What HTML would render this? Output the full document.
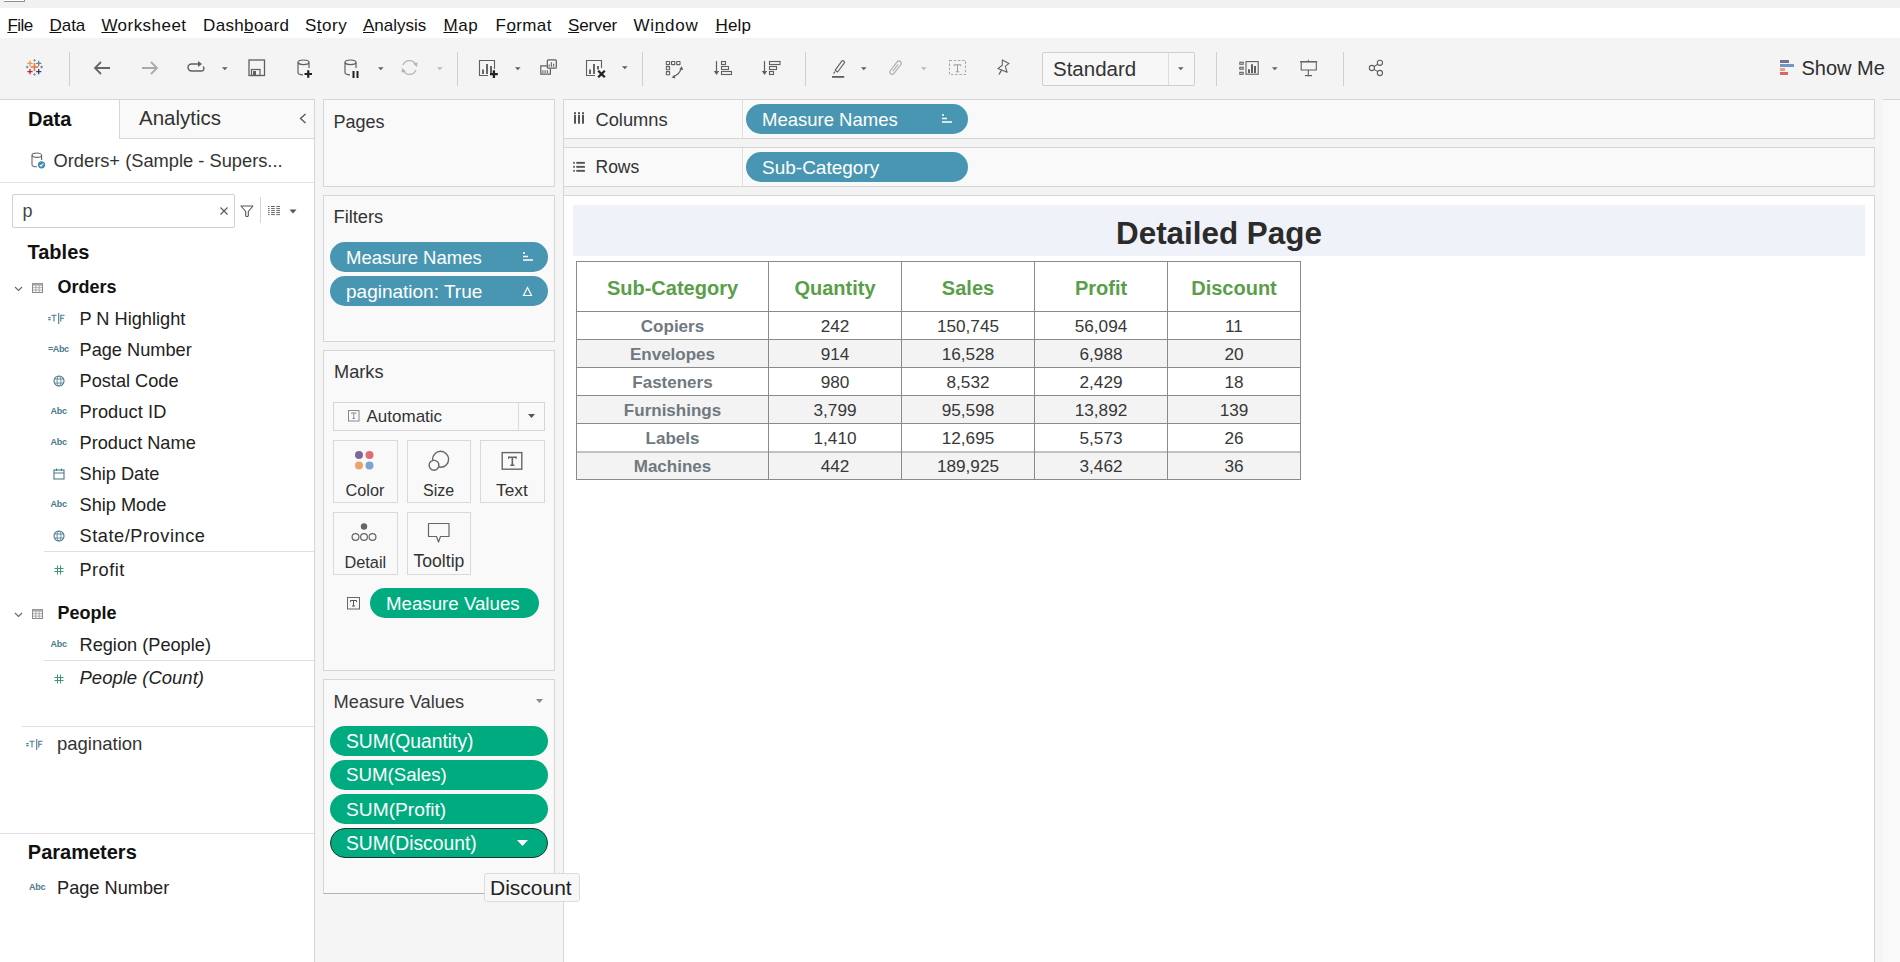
<!DOCTYPE html>
<html><head><meta charset="utf-8">
<style>
html,body{margin:0;padding:0;width:1900px;height:962px;overflow:hidden;background:#f0f0f0;}
body{position:relative;font-family:"Liberation Sans", sans-serif;}
.t{position:absolute;white-space:nowrap;}
.t u{text-decoration:underline;text-underline-offset:1px;text-decoration-thickness:1px;}
.r{position:absolute;box-sizing:border-box;}
.s{position:absolute;overflow:visible;}
</style></head><body>
<div class="r" style="left:0px;top:0px;width:1900px;height:8px;background:#f3f0f1"></div>
<div class="r" style="left:4px;top:0px;width:21px;height:2px;background:#fff;border-bottom:1px solid #918e8f;border-right:1px solid #918e8f;border-bottom-right-radius:1px"></div>
<div class="r" style="left:0px;top:8px;width:1900px;height:30px;background:#fff"></div>
<div class="r" style="left:0px;top:38px;width:1900px;height:61px;background:#f4f4f4"></div>
<div class="r" style="left:0px;top:99px;width:1900px;height:1px;background:#d3d3d3"></div>
<div class="r" style="left:0px;top:99px;width:1900px;height:863px;background:#f0f0f0"></div>
<div class="t" style="left:7.4px;top:16.6px;font-size:17px;line-height:17px;color:#111;font-weight:400;font-style:normal;letter-spacing:-0.5px"><u>F</u>ile</div>
<div class="t" style="left:49.4px;top:16.6px;font-size:17px;line-height:17px;color:#111;font-weight:400;font-style:normal;letter-spacing:0px"><u>D</u>ata</div>
<div class="t" style="left:101.4px;top:16.6px;font-size:17px;line-height:17px;color:#111;font-weight:400;font-style:normal;letter-spacing:0.46px"><u>W</u>orksheet</div>
<div class="t" style="left:203.0px;top:16.6px;font-size:17px;line-height:17px;color:#111;font-weight:400;font-style:normal;letter-spacing:0.35px">Dash<u>b</u>oard</div>
<div class="t" style="left:305.0px;top:16.6px;font-size:17px;line-height:17px;color:#111;font-weight:400;font-style:normal;letter-spacing:0.5px">S<u>t</u>ory</div>
<div class="t" style="left:363.0px;top:16.6px;font-size:17px;line-height:17px;color:#111;font-weight:400;font-style:normal;letter-spacing:0px"><u>A</u>nalysis</div>
<div class="t" style="left:443.4px;top:16.6px;font-size:17px;line-height:17px;color:#111;font-weight:400;font-style:normal;letter-spacing:0.6px"><u>M</u>ap</div>
<div class="t" style="left:495.6px;top:16.6px;font-size:17px;line-height:17px;color:#111;font-weight:400;font-style:normal;letter-spacing:0.4px">F<u>o</u>rmat</div>
<div class="t" style="left:568.0px;top:16.6px;font-size:17px;line-height:17px;color:#111;font-weight:400;font-style:normal;letter-spacing:-0.2px"><u>S</u>erver</div>
<div class="t" style="left:633.4px;top:16.6px;font-size:17px;line-height:17px;color:#111;font-weight:400;font-style:normal;letter-spacing:0.8px">Wi<u>n</u>dow</div>
<div class="t" style="left:715.4px;top:16.6px;font-size:17px;line-height:17px;color:#111;font-weight:400;font-style:normal;letter-spacing:0.2px"><u>H</u>elp</div>
<svg class="s" style="left:25px;top:59px;" width="19" height="17" viewBox="0 0 19 17"><path d="M5.5 8H13.5M9.5 4V12" stroke="#e8762c" stroke-width="1.6"/><path d="M2.4 4.3H7.6M5 1.6999999999999997V6.9" stroke="#eb9544" stroke-width="1.3"/><path d="M11.1 4.3H16.3M13.7 1.6999999999999997V6.9" stroke="#5b879b" stroke-width="1.3"/><path d="M2.4 12.6H7.6M5 10.0V15.2" stroke="#c72037" stroke-width="1.3"/><path d="M11.1 12.6H16.3M13.7 10.0V15.2" stroke="#1f447e" stroke-width="1.3"/><path d="M8.2 1.3H10.8M9.5 0.0V2.6" stroke="#7199a6" stroke-width="1"/><path d="M8.2 15.5H10.8M9.5 14.2V16.8" stroke="#7199a6" stroke-width="1"/><path d="M0.9000000000000001 8H3.5M2.2 6.7V9.3" stroke="#59879b" stroke-width="1"/><path d="M15.3 8H17.900000000000002M16.6 6.7V9.3" stroke="#7e6b8f" stroke-width="1"/></svg>
<div class="r" style="left:69px;top:52px;width:1px;height:34px;background:#d0d0d0"></div>
<svg class="s" style="left:93px;top:60px;" width="18" height="16" viewBox="0 0 18 16"><path d="M17 8H2M8 2L2 8L8 14" fill="none" stroke="#666" stroke-width="1.8"/></svg>
<svg class="s" style="left:141px;top:60px;" width="18" height="16" viewBox="0 0 18 16"><path d="M1 8H16M10 2L16 8L10 14" fill="none" stroke="#aaa" stroke-width="1.8"/></svg>
<svg class="s" style="left:186px;top:60px;" width="20" height="13" viewBox="0 0 20 13"><path d="M13 4H5.5A3.5 3.5 0 0 0 5.5 11H15.5A2.5 2.5 0 0 0 17 6.5" fill="none" stroke="#5f5f5f" stroke-width="1.4"/><path d="M12 1L16 4L12 7Z" fill="#5f5f5f"/></svg>
<svg class="s" style="left:222px;top:67px;" width="6" height="4" viewBox="0 0 6 4"><path d="M0 0.2H5.6L2.8 3.2Z" fill="#5f5f5f"/></svg>
<svg class="s" style="left:248px;top:59px;" width="18" height="18" viewBox="0 0 18 18"><rect x="1" y="1" width="15.5" height="15.5" fill="none" stroke="#5f5f5f" stroke-width="1.3"/><rect x="3.5" y="10.5" width="8.5" height="6" fill="none" stroke="#5f5f5f" stroke-width="1.2"/><rect x="5" y="12" width="3" height="5" fill="#5f5f5f"/></svg>
<svg class="s" style="left:297px;top:59px;" width="17" height="20" viewBox="0 0 17 20"><path d="M1 3.5V13.5A5.5 2.3 0 0 0 6 15.8" fill="none" stroke="#5f5f5f" stroke-width="1.2"/><ellipse cx="6.5" cy="3.3" rx="5.5" ry="2.3" fill="none" stroke="#5f5f5f" stroke-width="1.2"/><path d="M12 3.5V9" fill="none" stroke="#5f5f5f" stroke-width="1.2"/><path d="M7.5 15H15M11.25 11.2V18.8" stroke="#222" stroke-width="2.2"/></svg>
<svg class="s" style="left:344px;top:59px;" width="17" height="20" viewBox="0 0 17 20"><path d="M1 3.5V13.5A5.5 2.3 0 0 0 6 15.8" fill="none" stroke="#5f5f5f" stroke-width="1.2"/><ellipse cx="6.5" cy="3.3" rx="5.5" ry="2.3" fill="none" stroke="#5f5f5f" stroke-width="1.2"/><path d="M12 3.5V9" fill="none" stroke="#5f5f5f" stroke-width="1.2"/><path d="M9.5 12V19M13.5 12V19" stroke="#222" stroke-width="2"/></svg>
<svg class="s" style="left:378px;top:67px;" width="6" height="4" viewBox="0 0 6 4"><path d="M0 0.2H5.6L2.8 3.2Z" fill="#5f5f5f"/></svg>
<svg class="s" style="left:400px;top:59px;" width="19" height="17" viewBox="0 0 19 17"><path d="M3 6A7 7 0 0 1 16 6M16 11A7 7 0 0 1 3 11" fill="none" stroke="#b4b4b4" stroke-width="1.3"/><path d="M13 4.5L17.5 3.5L17 8Z M6 12.5L1.5 13.5L2 9Z" fill="#b4b4b4"/></svg>
<svg class="s" style="left:437px;top:67px;" width="6" height="4" viewBox="0 0 6 4"><path d="M0 0.2H5.6L2.8 3.2Z" fill="#bbb"/></svg>
<div class="r" style="left:457px;top:52px;width:1px;height:34px;background:#d0d0d0"></div>
<svg class="s" style="left:478px;top:59px;" width="22" height="20" viewBox="0 0 22 20"><path d="M10 16.5H1.5V1.5H16.5V10" fill="none" stroke="#5f5f5f" stroke-width="1.1"/><path d="M5 15V10.5M9 15V5M13 15V7" stroke="#666" stroke-width="2"/><path d="M12 15.1H19.8M15.9 11.2V19" stroke="#222" stroke-width="2.3"/></svg>
<svg class="s" style="left:515px;top:67px;" width="6" height="4" viewBox="0 0 6 4"><path d="M0 0.2H5.6L2.8 3.2Z" fill="#5f5f5f"/></svg>
<svg class="s" style="left:539px;top:58px;" width="20" height="19" viewBox="0 0 20 19"><path d="M8.3 7.8H1.8V16.2H11.4V10.8" fill="none" stroke="#5f5f5f" stroke-width="1.2"/><path d="M3.9 14.9V12.3M6.1 14.9V12.3M8.4 14.9V12.3" stroke="#666" stroke-width="1.1"/><rect x="8.3" y="1.8" width="9" height="8.4" rx="1" fill="#f4f4f4" stroke="#5f5f5f" stroke-width="1.2"/><path d="M10.2 8.8V6.5M12.4 8.8V4.2M14.6 8.8V5.8" stroke="#666" stroke-width="1.1"/></svg>
<svg class="s" style="left:585px;top:59px;" width="22" height="20" viewBox="0 0 22 20"><path d="M10 16.5H1.5V1.5H16.5V9" fill="none" stroke="#5f5f5f" stroke-width="1.1"/><path d="M5 15V10.5M9 15V5M13 10.5V7" stroke="#666" stroke-width="2"/><path d="M13.2 11.7L19.8 18.3M19.8 11.7L13.2 18.3" stroke="#222" stroke-width="2.3"/></svg>
<svg class="s" style="left:622px;top:66px;" width="6" height="4" viewBox="0 0 6 4"><path d="M0 0.2H5.6L2.8 3.2Z" fill="#5f5f5f"/></svg>
<div class="r" style="left:642px;top:52px;width:1px;height:34px;background:#d0d0d0"></div>
<svg class="s" style="left:665px;top:60px;" width="20" height="20" viewBox="0 0 20 20"><rect x="1.3" y="1.5" width="3.3" height="3.1" rx="0.3" fill="none" stroke="#5f5f5f" stroke-width="1.1"/><rect x="6.5" y="1.5" width="3.3" height="3.1" rx="0.3" fill="none" stroke="#5f5f5f" stroke-width="1.1"/><rect x="11.7" y="1.5" width="3.3" height="3.1" rx="0.3" fill="none" stroke="#5f5f5f" stroke-width="1.1"/><rect x="1.3" y="6.6" width="3.3" height="3.1" rx="0.3" fill="none" stroke="#5f5f5f" stroke-width="1.1"/><rect x="1.3" y="11.6" width="3.3" height="3.1" rx="0.3" fill="none" stroke="#5f5f5f" stroke-width="1.1"/><path d="M9 16.5Q14.5 14 16.3 8.5" fill="none" stroke="#5f5f5f" stroke-width="1.2"/><path d="M14.2 9.2L16.8 6.3L18.2 10Z M6.5 17.5L10.3 18.5L9.5 14.8Z" fill="#5f5f5f"/></svg>
<svg class="s" style="left:712px;top:60px;" width="22" height="18" viewBox="0 0 22 18"><path d="M4.5 1V12" stroke="#5f5f5f" stroke-width="1.2"/><path d="M1.8 11H7.2L4.5 15Z" fill="#5f5f5f"/><rect x="9.5" y="1.5" width="4" height="3" fill="none" stroke="#5f5f5f" stroke-width="1.1"/><rect x="9.5" y="6.5" width="7" height="3" fill="none" stroke="#5f5f5f" stroke-width="1.1"/><rect x="9.5" y="11.5" width="10" height="3" fill="none" stroke="#5f5f5f" stroke-width="1.1"/></svg>
<svg class="s" style="left:760px;top:60px;" width="22" height="18" viewBox="0 0 22 18"><path d="M4.5 1V12" stroke="#5f5f5f" stroke-width="1.2"/><path d="M1.8 11H7.2L4.5 15Z" fill="#5f5f5f"/><rect x="9.5" y="1.5" width="10.5" height="3" fill="none" stroke="#5f5f5f" stroke-width="1.1"/><rect x="9.5" y="6.5" width="7" height="3" fill="none" stroke="#5f5f5f" stroke-width="1.1"/><rect x="9.5" y="11.5" width="4" height="3" fill="none" stroke="#5f5f5f" stroke-width="1.1"/></svg>
<div class="r" style="left:805px;top:52px;width:1px;height:34px;background:#d0d0d0"></div>
<svg class="s" style="left:831px;top:59px;" width="15" height="20" viewBox="0 0 15 20"><path d="M4.2 11.2L10.8 2.2Q11.6 1.3 12.6 2L13.2 2.5Q13.9 3.3 13.2 4.2L6.6 13Z" fill="none" stroke="#5f5f5f" stroke-width="1.1" stroke-linejoin="round"/><path d="M3.9 12.6L2.6 14.6" stroke="#5f5f5f" stroke-width="1.1"/><rect x="1" y="17" width="12.2" height="1.8" fill="#5f5f5f"/></svg>
<svg class="s" style="left:861px;top:67px;" width="6" height="4" viewBox="0 0 6 4"><path d="M0 0.2H5.6L2.8 3.2Z" fill="#5f5f5f"/></svg>
<svg class="s" style="left:888px;top:59px;" width="16" height="17" viewBox="0 0 16 17"><g transform="rotate(38 7.5 8.5)"><rect x="5.3" y="0.8" width="4.6" height="15.5" rx="2.3" fill="none" stroke="#aaa" stroke-width="1.1"/><path d="M7.6 4.5V13" stroke="#aaa" stroke-width="1"/></g></svg>
<svg class="s" style="left:921px;top:67px;" width="6" height="4" viewBox="0 0 6 4"><path d="M0 0.2H5.6L2.8 3.2Z" fill="#bbb"/></svg>
<svg class="s" style="left:948px;top:59px;" width="19" height="17" viewBox="0 0 19 17"><rect x="1.5" y="1.5" width="16" height="14" fill="none" stroke="#aaa" stroke-width="1.1" stroke-dasharray="2.6 1.6"/><path d="M6.2 5.8H12.8M9.5 5.8V12.8M7.8 12.8H11.2M6.2 5.8V7.2M12.8 5.8V7.2" stroke="#999" stroke-width="1"/></svg>
<svg class="s" style="left:996px;top:59px;" width="15" height="17" viewBox="0 0 15 17"><path d="M6.3 1.1L13 4.4L9.3 7.4L11.1 13.3L5.6 11L1.9 9.6L6.3 6.3Z" fill="none" stroke="#5f5f5f" stroke-width="1.1" stroke-linejoin="round"/><path d="M5.6 11L3 15.5" stroke="#5f5f5f" stroke-width="1.3"/></svg>
<div class="r" style="left:1042px;top:52px;width:153px;height:34px;background:#f7f7f7;border:1px solid #cfcfcf;border-radius:2px"></div>
<div class="r" style="left:1168px;top:53px;width:1px;height:32px;background:#dcdcdc"></div>
<div class="t" style="left:1053.0px;top:58.6px;font-size:20.5px;line-height:20.5px;color:#333;font-weight:400;font-style:normal;">Standard</div>
<svg class="s" style="left:1178px;top:67px;" width="6" height="4" viewBox="0 0 6 4"><path d="M0 0.2H5.6L2.8 3.2Z" fill="#5f5f5f"/></svg>
<div class="r" style="left:1216px;top:52px;width:1px;height:34px;background:#d0d0d0"></div>
<svg class="s" style="left:1238px;top:59px;" width="23" height="17" viewBox="0 0 23 17"><rect x="1.85" y="3.25" width="3.3" height="2" fill="none" stroke="#5f5f5f" stroke-width="1.1"/><rect x="1.85" y="8.25" width="3.3" height="2" fill="none" stroke="#5f5f5f" stroke-width="1.1"/><rect x="1.85" y="13.3" width="3.3" height="2" fill="none" stroke="#5f5f5f" stroke-width="1.1"/><rect x="8" y="2.6" width="12.2" height="12.6" fill="none" stroke="#5f5f5f" stroke-width="1.1"/><path d="M11 14.1V10.3M14 14.1V5.2M17 14.1V7.1" stroke="#5f5f5f" stroke-width="2"/></svg>
<svg class="s" style="left:1272px;top:67px;" width="6" height="4" viewBox="0 0 6 4"><path d="M0 0.2H5.6L2.8 3.2Z" fill="#5f5f5f"/></svg>
<svg class="s" style="left:1299px;top:59px;" width="19" height="18" viewBox="0 0 19 18"><path d="M1 2.8H18.2" stroke="#5f5f5f" stroke-width="1.5"/><path d="M9.3 0.8V2.5" stroke="#5f5f5f" stroke-width="1"/><path d="M2.2 3.5V11H17.3V3.5" fill="none" stroke="#5f5f5f" stroke-width="1.1"/><path d="M9.3 11V16.5M6 16.6H13" stroke="#5f5f5f" stroke-width="1.1"/></svg>
<div class="r" style="left:1343px;top:52px;width:1px;height:34px;background:#d0d0d0"></div>
<svg class="s" style="left:1368px;top:59px;" width="16" height="18" viewBox="0 0 16 18"><circle cx="3.9" cy="9" r="2.6" fill="none" stroke="#5f5f5f" stroke-width="1.1"/><circle cx="11.9" cy="3.8" r="2.6" fill="none" stroke="#5f5f5f" stroke-width="1.1"/><circle cx="11.9" cy="14" r="2.6" fill="none" stroke="#5f5f5f" stroke-width="1.1"/><path d="M6.1 7.6L9.7 5.2M6.1 10.4L9.7 12.6" stroke="#5f5f5f" stroke-width="1.1"/></svg>
<svg class="s" style="left:1779px;top:59px;" width="16" height="17" viewBox="0 0 16 17"><rect x="1" y="1" width="9" height="3" fill="#7b6e8e"/><rect x="1" y="5" width="14" height="3" fill="#7097c2"/><rect x="1" y="9" width="5" height="3" fill="#e6a46f"/><rect x="1" y="13" width="8" height="3" fill="#e0636c"/></svg>
<div class="t" style="left:1801.5px;top:58.1px;font-size:20px;line-height:20px;color:#2e2e2e;font-weight:400;font-style:normal;">Show Me</div>
<div class="r" style="left:0px;top:99px;width:315px;height:863px;background:#fff;border-right:1px solid #d6d6d6;border-top:1px solid #d3d3d3"></div>
<div class="r" style="left:119px;top:99px;width:196px;height:40px;background:#f9f9f9;border-left:1px solid #d6d6d6;border-bottom:1px solid #d6d6d6;border-top:1px solid #d3d3d3;border-right:1px solid #d6d6d6"></div>
<div class="t" style="left:28.0px;top:109.1px;font-size:20px;line-height:20px;color:#111;font-weight:700;font-style:normal;">Data</div>
<div class="t" style="left:139.0px;top:108.1px;font-size:20.5px;line-height:20.5px;color:#333;font-weight:400;font-style:normal;">Analytics</div>
<svg class="s" style="left:299px;top:113px;" width="8" height="11" viewBox="0 0 8 11"><path d="M6.5 1L1.5 5.5L6.5 10" fill="none" stroke="#555" stroke-width="1.3"/></svg>
<svg class="s" style="left:31px;top:152px;" width="15" height="17" viewBox="0 0 15 17"><path d="M1 3.5V12.5A4.5 2 0 0 0 6 14.8" fill="none" stroke="#666" stroke-width="1.1"/><ellipse cx="5.8" cy="3.2" rx="4.8" ry="2.2" fill="none" stroke="#666" stroke-width="1.1"/><path d="M10.6 3.5V8" stroke="#666" stroke-width="1.1"/><circle cx="10.5" cy="12.8" r="3.6" fill="#3d8bb0"/><path d="M8.7 12.8L10 14.1L12.4 11.5" fill="none" stroke="#fff" stroke-width="1.1"/></svg>
<div class="t" style="left:53.5px;top:151.5px;font-size:18.3px;line-height:18.3px;color:#333;font-weight:400;font-style:normal;">Orders+ (Sample - Supers...</div>
<div class="r" style="left:0px;top:182px;width:314px;height:1px;background:#e3e3e3"></div>
<div class="r" style="left:12px;top:194px;width:223px;height:34px;background:#fff;border:1px solid #cfcfcf;border-radius:2px"></div>
<div class="t" style="left:22.5px;top:201.8px;font-size:18px;line-height:18px;color:#444;font-weight:400;font-style:normal;">p</div>
<svg class="s" style="left:219.5px;top:206.5px;" width="8" height="8" viewBox="0 0 8 8"><path d="M0.5 0.5L7.5 7.5M7.5 0.5L0.5 7.5" stroke="#555" stroke-width="1.1"/></svg>
<svg class="s" style="left:239.5px;top:204.5px;" width="14" height="13" viewBox="0 0 14 13"><path d="M1 1H13L8.3 6.5V10.8Q7 12.3 5.7 10.8V6.5Z" fill="none" stroke="#555" stroke-width="1.1" stroke-linejoin="round"/></svg>
<div class="r" style="left:260px;top:197px;width:1px;height:26px;background:#d6d6d6"></div>
<svg class="s" style="left:267px;top:205px;" width="14" height="11" viewBox="0 0 14 11"><path d="M1 1.5H2.6M4.1 1.5H7.8M9.3 1.5H13" stroke="#555" stroke-width="0.9"/><path d="M1 3.6H2.6M4.1 3.6H7.8M9.3 3.6H13" stroke="#555" stroke-width="0.9"/><path d="M1 5.6H2.6M4.1 5.6H7.8M9.3 5.6H13" stroke="#555" stroke-width="0.9"/><path d="M1 7.6H2.6M4.1 7.6H7.8M9.3 7.6H13" stroke="#555" stroke-width="0.9"/><path d="M1 9.6H2.6M4.1 9.6H7.8M9.3 9.6H13" stroke="#555" stroke-width="0.9"/></svg>
<svg class="s" style="left:289px;top:209px;" width="8" height="5" viewBox="0 0 8 5"><path d="M0.5 0.5H7.5L4 4.5Z" fill="#555"/></svg>
<div class="t" style="left:27.5px;top:242.1px;font-size:20px;line-height:20px;color:#111;font-weight:700;font-style:normal;">Tables</div>
<svg class="s" style="left:14px;top:285.5px;" width="9" height="6" viewBox="0 0 9 6"><path d="M1 1L4.5 4.5L8 1" fill="none" stroke="#666" stroke-width="1.1"/></svg>
<svg class="s" style="left:32px;top:283px;" width="11" height="10" viewBox="0 0 11 10"><rect x="0.5" y="0.5" width="10" height="9" fill="none" stroke="#888" stroke-width="1"/><rect x="0.5" y="0.5" width="10" height="2.2" fill="#aaa"/><path d="M0.5 4.7H10.5M0.5 7.1H10.5M3.8 2.5V9.5M7.2 2.5V9.5" stroke="#999" stroke-width="0.8"/></svg>
<div class="t" style="left:57.5px;top:277.8px;font-size:18px;line-height:18px;color:#111;font-weight:700;font-style:normal;">Orders</div>
<svg class="s" style="left:48px;top:312.5px;" width="18" height="12" viewBox="0 0 18 12"><path d="M0.3 4.6H2.6M0.3 6.6H2.6M3.5 2.2H8.5M6 2.2V8.5M10.7 0V11M12.8 8.5V2.2H16.6M12.8 5.3H16" fill="none" stroke="#4a7a8c" stroke-width="1.1"/></svg>
<div class="t" style="left:79.5px;top:310.1px;font-size:18.2px;line-height:18.2px;color:#222;font-weight:400;font-style:normal;letter-spacing:0px">P N Highlight</div>
<div class="t" style="left:48.0px;top:345.2px;font-size:9px;line-height:9px;color:#4a7a8c;font-weight:700;font-style:normal;letter-spacing:-0.4px">=Abc</div>
<div class="t" style="left:79.5px;top:340.9px;font-size:18.2px;line-height:18.2px;color:#222;font-weight:400;font-style:normal;letter-spacing:0px">Page Number</div>
<svg class="s" style="left:52.5px;top:374.8px;" width="12" height="12" viewBox="0 0 12 12"><circle cx="6" cy="6" r="5" fill="none" stroke="#4a7a8c" stroke-width="1.1"/><path d="M1.5 4H10.5M1.5 8H10.5" stroke="#4a7a8c" stroke-width="0.8"/><ellipse cx="6" cy="6" rx="2" ry="5" fill="none" stroke="#4a7a8c" stroke-width="0.8"/></svg>
<div class="t" style="left:79.5px;top:371.9px;font-size:18.2px;line-height:18.2px;color:#222;font-weight:400;font-style:normal;letter-spacing:0px">Postal Code</div>
<div class="t" style="left:50.5px;top:407.4px;font-size:9px;line-height:9px;color:#4a7a8c;font-weight:700;font-style:normal;letter-spacing:-0.2px">Abc</div>
<div class="t" style="left:79.5px;top:403.1px;font-size:18.2px;line-height:18.2px;color:#222;font-weight:400;font-style:normal;letter-spacing:0.1px">Product ID</div>
<div class="t" style="left:50.5px;top:438.4px;font-size:9px;line-height:9px;color:#4a7a8c;font-weight:700;font-style:normal;letter-spacing:-0.2px">Abc</div>
<div class="t" style="left:79.5px;top:434.1px;font-size:18.2px;line-height:18.2px;color:#222;font-weight:400;font-style:normal;letter-spacing:0.0px">Product Name</div>
<svg class="s" style="left:53px;top:467.8px;" width="12" height="12" viewBox="0 0 12 12"><rect x="1" y="2" width="10" height="9" fill="none" stroke="#4a7a8c" stroke-width="1.1"/><path d="M1 5H11M3.5 0.5V3M8.5 0.5V3" stroke="#4a7a8c" stroke-width="1.1"/></svg>
<div class="t" style="left:79.5px;top:464.9px;font-size:18.2px;line-height:18.2px;color:#222;font-weight:400;font-style:normal;letter-spacing:0px">Ship Date</div>
<div class="t" style="left:50.5px;top:500.4px;font-size:9px;line-height:9px;color:#4a7a8c;font-weight:700;font-style:normal;letter-spacing:-0.2px">Abc</div>
<div class="t" style="left:79.5px;top:496.1px;font-size:18.2px;line-height:18.2px;color:#222;font-weight:400;font-style:normal;letter-spacing:0px">Ship Mode</div>
<svg class="s" style="left:52.5px;top:530.0px;" width="12" height="12" viewBox="0 0 12 12"><circle cx="6" cy="6" r="5" fill="none" stroke="#4a7a8c" stroke-width="1.1"/><path d="M1.5 4H10.5M1.5 8H10.5" stroke="#4a7a8c" stroke-width="0.8"/><ellipse cx="6" cy="6" rx="2" ry="5" fill="none" stroke="#4a7a8c" stroke-width="0.8"/></svg>
<div class="t" style="left:79.5px;top:527.1px;font-size:18.2px;line-height:18.2px;color:#222;font-weight:400;font-style:normal;letter-spacing:0.55px">State/Province</div>
<div class="r" style="left:44px;top:551px;width:270px;height:1px;background:#e0e0e0"></div>
<svg class="s" style="left:53px;top:564.4px;" width="12" height="12" viewBox="0 0 12 12"><path d="M4.5 1.5V10.5M7.5 1.5V10.5M1.5 4.5H10.5M1.5 7.5H10.5" stroke="#3a9a78" stroke-width="1"/></svg>
<div class="t" style="left:79.5px;top:561.0px;font-size:18.2px;line-height:18.2px;color:#222;font-weight:400;font-style:normal;letter-spacing:0.45px">Profit</div>
<svg class="s" style="left:14px;top:612px;" width="9" height="6" viewBox="0 0 9 6"><path d="M1 1L4.5 4.5L8 1" fill="none" stroke="#666" stroke-width="1.1"/></svg>
<svg class="s" style="left:32px;top:609px;" width="11" height="10" viewBox="0 0 11 10"><rect x="0.5" y="0.5" width="10" height="9" fill="none" stroke="#888" stroke-width="1"/><rect x="0.5" y="0.5" width="10" height="2.2" fill="#aaa"/><path d="M0.5 4.7H10.5M0.5 7.1H10.5M3.8 2.5V9.5M7.2 2.5V9.5" stroke="#999" stroke-width="0.8"/></svg>
<div class="t" style="left:57.5px;top:603.8px;font-size:18px;line-height:18px;color:#111;font-weight:700;font-style:normal;">People</div>
<div class="t" style="left:50.5px;top:640.2px;font-size:9px;line-height:9px;color:#4a7a8c;font-weight:700;font-style:normal;letter-spacing:-0.2px">Abc</div>
<div class="t" style="left:79.5px;top:635.9px;font-size:18.2px;line-height:18.2px;color:#222;font-weight:400;font-style:normal;">Region (People)</div>
<div class="r" style="left:44px;top:660px;width:270px;height:1px;background:#e0e0e0"></div>
<svg class="s" style="left:53px;top:673px;" width="12" height="12" viewBox="0 0 12 12"><path d="M4.5 1.5V10.5M7.5 1.5V10.5M1.5 4.5H10.5M1.5 7.5H10.5" stroke="#3a9a78" stroke-width="1"/></svg>
<div class="t" style="left:79.5px;top:669.3px;font-size:18.5px;line-height:18.5px;color:#222;font-weight:400;font-style:italic;">People (Count)</div>
<div class="r" style="left:22px;top:726px;width:292px;height:1px;background:#e0e0e0"></div>
<svg class="s" style="left:26px;top:738.5px;" width="18" height="12" viewBox="0 0 18 12"><path d="M0.3 4.6H2.6M0.3 6.6H2.6M3.5 2.2H8.5M6 2.2V8.5M10.7 0V11M12.8 8.5V2.2H16.6M12.8 5.3H16" fill="none" stroke="#4a7a8c" stroke-width="1.1"/></svg>
<div class="t" style="left:57.0px;top:735.3px;font-size:18.5px;line-height:18.5px;color:#333;font-weight:400;font-style:normal;">pagination</div>
<div class="r" style="left:0px;top:833px;width:314px;height:1px;background:#e0e0e0"></div>
<div class="t" style="left:27.8px;top:842.1px;font-size:20px;line-height:20px;color:#111;font-weight:700;font-style:normal;">Parameters</div>
<div class="t" style="left:29.0px;top:883.4px;font-size:9px;line-height:9px;color:#4a7a8c;font-weight:700;font-style:normal;letter-spacing:-0.2px">Abc</div>
<div class="t" style="left:57.0px;top:878.6px;font-size:18.2px;line-height:18.2px;color:#222;font-weight:400;font-style:normal;">Page Number</div>
<div class="r" style="left:315px;top:99px;width:249px;height:863px;background:#f5f5f5;border-right:1px solid #d4d4d4"></div>
<div class="r" style="left:323px;top:99px;width:232px;height:88px;background:#f9f9f9;border:1px solid #d6d6d6"></div>
<div class="t" style="left:333.5px;top:112.8px;font-size:18px;line-height:18px;color:#333;font-weight:400;font-style:normal;">Pages</div>
<div class="r" style="left:323px;top:195px;width:232px;height:147px;background:#f9f9f9;border:1px solid #d6d6d6"></div>
<div class="t" style="left:333.5px;top:207.5px;font-size:18.3px;line-height:18.3px;color:#333;font-weight:400;font-style:normal;">Filters</div>
<div class="r" style="left:330px;top:242px;width:218px;height:30px;background:#4996b2;border-radius:15.0px;"></div>
<div class="t" style="left:346.0px;top:249.3px;font-size:18.5px;line-height:18.5px;color:#fff;font-weight:400;font-style:normal;">Measure Names</div>
<svg class="s" style="left:522px;top:252px;" width="12" height="11" viewBox="0 0 12 11"><path d="M1 1H3M1 4.5H6M1 8H11" stroke="#fff" stroke-width="1.5"/></svg>
<div class="r" style="left:330px;top:276px;width:218px;height:30px;background:#4996b2;border-radius:15.0px;"></div>
<div class="t" style="left:346.0px;top:281.9px;font-size:19px;line-height:19px;color:#fff;font-weight:400;font-style:normal;">pagination: True</div>
<svg class="s" style="left:522px;top:286px;" width="11" height="11" viewBox="0 0 11 11"><path d="M5.5 1.5L9.5 9.5H1.5Z" fill="none" stroke="#fff" stroke-width="1.2"/></svg>
<div class="r" style="left:323px;top:350px;width:232px;height:321px;background:#f9f9f9;border:1px solid #d6d6d6"></div>
<div class="t" style="left:334.0px;top:362.6px;font-size:18.2px;line-height:18.2px;color:#333;font-weight:400;font-style:normal;">Marks</div>
<div class="r" style="left:333px;top:402px;width:212px;height:29px;background:#f9f9f9;border:1px solid #d6d6d6"></div>
<div class="r" style="left:518px;top:403px;width:1px;height:27px;background:#dcdcdc"></div>
<svg class="s" style="left:348px;top:410px;" width="12" height="12" viewBox="0 0 12 12"><rect x="0.5" y="0.5" width="10.5" height="10.5" fill="none" stroke="#888" stroke-width="1"/><path d="M3 3H8.5M5.75 3V8.5M4.5 8.5H7" stroke="#888" stroke-width="1"/></svg>
<div class="t" style="left:366.5px;top:407.6px;font-size:17px;line-height:17px;color:#333;font-weight:400;font-style:normal;">Automatic</div>
<svg class="s" style="left:528px;top:414px;" width="7" height="5" viewBox="0 0 7 5"><path d="M0 0H7L3.5 4Z" fill="#555"/></svg>
<div class="r" style="left:333px;top:440px;width:65px;height:63px;background:#f9f9f9;border:1px solid #d9d9d9"></div>
<div class="r" style="left:407px;top:440px;width:64px;height:63px;background:#f9f9f9;border:1px solid #d9d9d9"></div>
<div class="r" style="left:480px;top:440px;width:65px;height:63px;background:#f9f9f9;border:1px solid #d9d9d9"></div>
<div class="r" style="left:333px;top:512px;width:65px;height:63px;background:#f9f9f9;border:1px solid #d9d9d9"></div>
<div class="r" style="left:407px;top:512px;width:64px;height:63px;background:#f9f9f9;border:1px solid #d9d9d9"></div>
<svg class="s" style="left:354px;top:450px;" width="22" height="22" viewBox="0 0 22 22"><circle cx="5" cy="5" r="4" fill="#7b6b93"/><circle cx="15.5" cy="5" r="4" fill="#e06c78"/><circle cx="5" cy="15.5" r="4" fill="#eda46c"/><circle cx="15.5" cy="15.5" r="4" fill="#7fa3cf"/></svg>
<div class="t" style="left:345.5px;top:482.2px;font-size:16.3px;line-height:16.3px;color:#333;font-weight:400;font-style:normal;">Color</div>
<svg class="s" style="left:427px;top:449px;" width="24" height="24" viewBox="0 0 24 24"><circle cx="13.6" cy="10.3" r="8" fill="none" stroke="#666" stroke-width="1.4"/><circle cx="7" cy="16.3" r="4.9" fill="#f9f9f9" stroke="#666" stroke-width="1.4"/></svg>
<div class="t" style="left:423.0px;top:482.5px;font-size:16px;line-height:16px;color:#333;font-weight:400;font-style:normal;">Size</div>
<svg class="s" style="left:500px;top:450px;" width="24" height="22" viewBox="0 0 24 22"><rect x="2.2" y="2.6" width="19.6" height="16.6" fill="none" stroke="#666" stroke-width="1.4"/><path d="M8.3 7.2H16.4M12.35 7.2V15M10.3 15.2H14.4" stroke="#666" stroke-width="1.6"/><path d="M8.6 6.5V9M16.1 6.5V9" stroke="#666" stroke-width="1"/></svg>
<div class="t" style="left:496.0px;top:482.2px;font-size:17.3px;line-height:17.3px;color:#333;font-weight:400;font-style:normal;">Text</div>
<svg class="s" style="left:351px;top:522px;" width="26" height="22" viewBox="0 0 26 22"><circle cx="13" cy="4.5" r="3.2" fill="#666"/><circle cx="4.5" cy="15" r="3.4" fill="none" stroke="#666" stroke-width="1.2"/><circle cx="13" cy="15" r="3.4" fill="none" stroke="#666" stroke-width="1.2"/><circle cx="21.5" cy="15" r="3.4" fill="none" stroke="#666" stroke-width="1.2"/></svg>
<div class="t" style="left:344.5px;top:554.2px;font-size:16.3px;line-height:16.3px;color:#333;font-weight:400;font-style:normal;">Detail</div>
<svg class="s" style="left:427px;top:522px;" width="24" height="22" viewBox="0 0 24 22"><path d="M1.5 1.5H22V14.5H13.5L11.5 20L9.5 14.5H1.5Z" fill="none" stroke="#666" stroke-width="1.2" stroke-linejoin="round"/></svg>
<div class="t" style="left:413.5px;top:553.1px;font-size:17.6px;line-height:17.6px;color:#333;font-weight:400;font-style:normal;">Tooltip</div>
<svg class="s" style="left:346px;top:596px;" width="15" height="14" viewBox="0 0 15 14"><rect x="1.5" y="1.5" width="12" height="11.5" fill="none" stroke="#666" stroke-width="1"/><path d="M4.5 4.5H10.5M7.5 4.5V10M6 10H9M4.5 4.5V6M10.5 4.5V6" stroke="#555" stroke-width="1"/></svg>
<div class="r" style="left:370px;top:588px;width:169px;height:30px;background:#00ac7f;border-radius:15.0px;"></div>
<div class="t" style="left:386.0px;top:595.2px;font-size:18.7px;line-height:18.7px;color:#fff;font-weight:400;font-style:normal;">Measure Values</div>
<div class="r" style="left:323px;top:679px;width:232px;height:215px;background:#f9f9f9;border:1px solid #d6d6d6;border-bottom-color:#b4b4b4"></div>
<div class="t" style="left:333.5px;top:693.0px;font-size:18.3px;line-height:18.3px;color:#3a3a3a;font-weight:400;font-style:normal;">Measure Values</div>
<svg class="s" style="left:536px;top:699px;" width="8" height="5" viewBox="0 0 8 5"><path d="M0 0H7L3.5 4Z" fill="#888"/></svg>
<div class="r" style="left:330px;top:726px;width:218px;height:30px;background:#00ac7f;border-radius:15.0px;"></div>
<div class="t" style="left:346.0px;top:731.7px;font-size:19.3px;line-height:19.3px;color:#fff;font-weight:400;font-style:normal;">SUM(Quantity)</div>
<div class="r" style="left:330px;top:760px;width:218px;height:30px;background:#00ac7f;border-radius:15.0px;"></div>
<div class="t" style="left:346.0px;top:766.2px;font-size:18.7px;line-height:18.7px;color:#fff;font-weight:400;font-style:normal;">SUM(Sales)</div>
<div class="r" style="left:330px;top:794px;width:218px;height:30px;background:#00ac7f;border-radius:15.0px;"></div>
<div class="t" style="left:346.0px;top:799.7px;font-size:19.2px;line-height:19.2px;color:#fff;font-weight:400;font-style:normal;">SUM(Profit)</div>
<div class="r" style="left:330px;top:828px;width:218px;height:30px;background:#00ac7f;border-radius:15.0px;border:1px solid #17382f"></div>
<div class="t" style="left:346.0px;top:833.7px;font-size:19.3px;line-height:19.3px;color:#fff;font-weight:400;font-style:normal;">SUM(Discount)</div>
<svg class="s" style="left:517px;top:840px;" width="12" height="7" viewBox="0 0 12 7"><path d="M0 0H11L5.5 6Z" fill="#fff"/></svg>
<div class="r" style="left:564px;top:99px;width:1336px;height:863px;background:#f3f3f3"></div>
<div class="r" style="left:563px;top:99px;width:1312px;height:40px;background:#f9f9f9;border:1px solid #d6d6d6"></div>
<div class="r" style="left:742px;top:100px;width:1px;height:38px;background:#dedede"></div>
<svg class="s" style="left:573px;top:110px;" width="12" height="14" viewBox="0 0 12 14"><rect x="1" y="2.2" width="2" height="1.8" fill="#555"/><rect x="1" y="4.7" width="2" height="9" fill="#555"/><rect x="5" y="2.2" width="2" height="1.8" fill="#555"/><rect x="5" y="4.7" width="2" height="9" fill="#555"/><rect x="9" y="2.2" width="2" height="1.8" fill="#555"/><rect x="9" y="4.7" width="2" height="9" fill="#555"/></svg>
<div class="t" style="left:595.5px;top:110.5px;font-size:18.3px;line-height:18.3px;color:#333;font-weight:400;font-style:normal;">Columns</div>
<div class="r" style="left:746px;top:104px;width:222px;height:30px;background:#4996b2;border-radius:15px"></div>
<div class="t" style="left:762.0px;top:111.3px;font-size:18.5px;line-height:18.5px;color:#fff;font-weight:400;font-style:normal;">Measure Names</div>
<svg class="s" style="left:941px;top:114px;" width="12" height="11" viewBox="0 0 12 11"><path d="M1 1H3M1 4.5H6M1 8H11" stroke="#fff" stroke-width="1.5"/></svg>
<div class="r" style="left:563px;top:147px;width:1312px;height:40px;background:#f9f9f9;border:1px solid #d6d6d6"></div>
<div class="r" style="left:742px;top:148px;width:1px;height:38px;background:#dedede"></div>
<svg class="s" style="left:572px;top:159px;" width="14" height="14" viewBox="0 0 14 14"><rect x="1.2" y="2.9" width="1.6" height="1.9" fill="#555"/><rect x="4.3" y="2.9" width="8.6" height="1.9" fill="#555"/><rect x="1.2" y="6.9" width="1.6" height="1.9" fill="#555"/><rect x="4.3" y="6.9" width="8.6" height="1.9" fill="#555"/><rect x="1.2" y="10.9" width="1.6" height="1.9" fill="#555"/><rect x="4.3" y="10.9" width="8.6" height="1.9" fill="#555"/></svg>
<div class="t" style="left:595.5px;top:159.2px;font-size:17.5px;line-height:17.5px;color:#333;font-weight:400;font-style:normal;">Rows</div>
<div class="r" style="left:746px;top:152px;width:222px;height:30px;background:#4996b2;border-radius:15px"></div>
<div class="t" style="left:762.0px;top:157.9px;font-size:19px;line-height:19px;color:#fff;font-weight:400;font-style:normal;">Sub-Category</div>
<div class="r" style="left:563px;top:195px;width:1312px;height:767px;background:#fff;border:1px solid #d6d6d6;border-bottom:none"></div>
<div class="r" style="left:573px;top:205px;width:1292px;height:51px;background:#eff2f9"></div>
<div class="t" style="left:1116.0px;top:218.4px;font-size:31.4px;line-height:31.4px;color:#2b2b2b;font-weight:700;font-style:normal;">Detailed Page</div>
<div class="r" style="left:576px;top:339px;width:725px;height:28px;background:#f3f3f3"></div>
<div class="r" style="left:576px;top:395px;width:725px;height:28px;background:#f3f3f3"></div>
<div class="r" style="left:576px;top:452px;width:725px;height:27px;background:#f3f3f3"></div>
<svg class="s" style="left:575px;top:261px;" width="727" height="220" viewBox="0 0 727 220"><path d="M1.5 0.5V218.5" stroke="#8a8a8a" stroke-width="1"/><path d="M193.5 0.5V218.5" stroke="#8a8a8a" stroke-width="1"/><path d="M326.5 0.5V218.5" stroke="#8a8a8a" stroke-width="1"/><path d="M459.5 0.5V218.5" stroke="#8a8a8a" stroke-width="1"/><path d="M592.5 0.5V218.5" stroke="#8a8a8a" stroke-width="1"/><path d="M725.5 0.5V218.5" stroke="#8a8a8a" stroke-width="1"/><path d="M1 0.5H726.0" stroke="#8a8a8a" stroke-width="1"/><path d="M1 50.5H726.0" stroke="#8a8a8a" stroke-width="1"/><path d="M1 78.5H726.0" stroke="#8a8a8a" stroke-width="1"/><path d="M1 106.5H726.0" stroke="#8a8a8a" stroke-width="1"/><path d="M1 134.5H726.0" stroke="#8a8a8a" stroke-width="1"/><path d="M1 162.5H726.0" stroke="#8a8a8a" stroke-width="1"/><path d="M1 191.0H726.0" stroke="#8a8a8a" stroke-width="1"/><path d="M1 218.5H726.0" stroke="#8a8a8a" stroke-width="1"/></svg>
<div class="t" style="left:576.5px;top:278.1px;width:192.0px;text-align:center;font-size:20px;line-height:20px;color:#5a9e4a;font-weight:700">Sub-Category</div>
<div class="t" style="left:768.5px;top:278.1px;width:133.0px;text-align:center;font-size:20px;line-height:20px;color:#5a9e4a;font-weight:700">Quantity</div>
<div class="t" style="left:901.5px;top:278.1px;width:133.0px;text-align:center;font-size:20px;line-height:20px;color:#5a9e4a;font-weight:700">Sales</div>
<div class="t" style="left:1034.5px;top:278.1px;width:133.0px;text-align:center;font-size:20px;line-height:20px;color:#5a9e4a;font-weight:700">Profit</div>
<div class="t" style="left:1167.5px;top:278.1px;width:133.0px;text-align:center;font-size:20px;line-height:20px;color:#5a9e4a;font-weight:700">Discount</div>
<div class="t" style="left:576.5px;top:317.6px;width:192.0px;text-align:center;font-size:17px;line-height:17px;color:#707880;font-weight:700">Copiers</div>
<div class="t" style="left:768.5px;top:317.9px;width:133.0px;text-align:center;font-size:17.2px;line-height:17.2px;color:#383838;font-weight:400">242</div>
<div class="t" style="left:901.5px;top:317.9px;width:133.0px;text-align:center;font-size:17.2px;line-height:17.2px;color:#383838;font-weight:400">150,745</div>
<div class="t" style="left:1034.5px;top:317.9px;width:133.0px;text-align:center;font-size:17.2px;line-height:17.2px;color:#383838;font-weight:400">56,094</div>
<div class="t" style="left:1167.5px;top:317.9px;width:133.0px;text-align:center;font-size:17.2px;line-height:17.2px;color:#383838;font-weight:400">11</div>
<div class="t" style="left:576.5px;top:345.6px;width:192.0px;text-align:center;font-size:17px;line-height:17px;color:#707880;font-weight:700">Envelopes</div>
<div class="t" style="left:768.5px;top:345.9px;width:133.0px;text-align:center;font-size:17.2px;line-height:17.2px;color:#383838;font-weight:400">914</div>
<div class="t" style="left:901.5px;top:345.9px;width:133.0px;text-align:center;font-size:17.2px;line-height:17.2px;color:#383838;font-weight:400">16,528</div>
<div class="t" style="left:1034.5px;top:345.9px;width:133.0px;text-align:center;font-size:17.2px;line-height:17.2px;color:#383838;font-weight:400">6,988</div>
<div class="t" style="left:1167.5px;top:345.9px;width:133.0px;text-align:center;font-size:17.2px;line-height:17.2px;color:#383838;font-weight:400">20</div>
<div class="t" style="left:576.5px;top:373.6px;width:192.0px;text-align:center;font-size:17px;line-height:17px;color:#707880;font-weight:700">Fasteners</div>
<div class="t" style="left:768.5px;top:373.9px;width:133.0px;text-align:center;font-size:17.2px;line-height:17.2px;color:#383838;font-weight:400">980</div>
<div class="t" style="left:901.5px;top:373.9px;width:133.0px;text-align:center;font-size:17.2px;line-height:17.2px;color:#383838;font-weight:400">8,532</div>
<div class="t" style="left:1034.5px;top:373.9px;width:133.0px;text-align:center;font-size:17.2px;line-height:17.2px;color:#383838;font-weight:400">2,429</div>
<div class="t" style="left:1167.5px;top:373.9px;width:133.0px;text-align:center;font-size:17.2px;line-height:17.2px;color:#383838;font-weight:400">18</div>
<div class="t" style="left:576.5px;top:401.6px;width:192.0px;text-align:center;font-size:17px;line-height:17px;color:#707880;font-weight:700">Furnishings</div>
<div class="t" style="left:768.5px;top:401.9px;width:133.0px;text-align:center;font-size:17.2px;line-height:17.2px;color:#383838;font-weight:400">3,799</div>
<div class="t" style="left:901.5px;top:401.9px;width:133.0px;text-align:center;font-size:17.2px;line-height:17.2px;color:#383838;font-weight:400">95,598</div>
<div class="t" style="left:1034.5px;top:401.9px;width:133.0px;text-align:center;font-size:17.2px;line-height:17.2px;color:#383838;font-weight:400">13,892</div>
<div class="t" style="left:1167.5px;top:401.9px;width:133.0px;text-align:center;font-size:17.2px;line-height:17.2px;color:#383838;font-weight:400">139</div>
<div class="t" style="left:576.5px;top:429.6px;width:192.0px;text-align:center;font-size:17px;line-height:17px;color:#707880;font-weight:700">Labels</div>
<div class="t" style="left:768.5px;top:429.9px;width:133.0px;text-align:center;font-size:17.2px;line-height:17.2px;color:#383838;font-weight:400">1,410</div>
<div class="t" style="left:901.5px;top:429.9px;width:133.0px;text-align:center;font-size:17.2px;line-height:17.2px;color:#383838;font-weight:400">12,695</div>
<div class="t" style="left:1034.5px;top:429.9px;width:133.0px;text-align:center;font-size:17.2px;line-height:17.2px;color:#383838;font-weight:400">5,573</div>
<div class="t" style="left:1167.5px;top:429.9px;width:133.0px;text-align:center;font-size:17.2px;line-height:17.2px;color:#383838;font-weight:400">26</div>
<div class="t" style="left:576.5px;top:457.6px;width:192.0px;text-align:center;font-size:17px;line-height:17px;color:#707880;font-weight:700">Machines</div>
<div class="t" style="left:768.5px;top:457.9px;width:133.0px;text-align:center;font-size:17.2px;line-height:17.2px;color:#383838;font-weight:400">442</div>
<div class="t" style="left:901.5px;top:457.9px;width:133.0px;text-align:center;font-size:17.2px;line-height:17.2px;color:#383838;font-weight:400">189,925</div>
<div class="t" style="left:1034.5px;top:457.9px;width:133.0px;text-align:center;font-size:17.2px;line-height:17.2px;color:#383838;font-weight:400">3,462</div>
<div class="t" style="left:1167.5px;top:457.9px;width:133.0px;text-align:center;font-size:17.2px;line-height:17.2px;color:#383838;font-weight:400">36</div>
<div class="r" style="left:1875px;top:99px;width:25px;height:863px;background:#f5f5f5"></div>
<div class="r" style="left:1883px;top:99px;width:17px;height:863px;background:#f9f9f9;border-top:1px solid #d3d3d3"></div>
<div class="r" style="left:484px;top:873px;width:96px;height:29px;background:#f7f7f7;border:1px solid #dcdcdc;border-radius:3px"></div>
<div class="t" style="left:490.0px;top:877.2px;font-size:21px;line-height:21px;color:#222;font-weight:400;font-style:normal;">Discount</div>
</body></html>
